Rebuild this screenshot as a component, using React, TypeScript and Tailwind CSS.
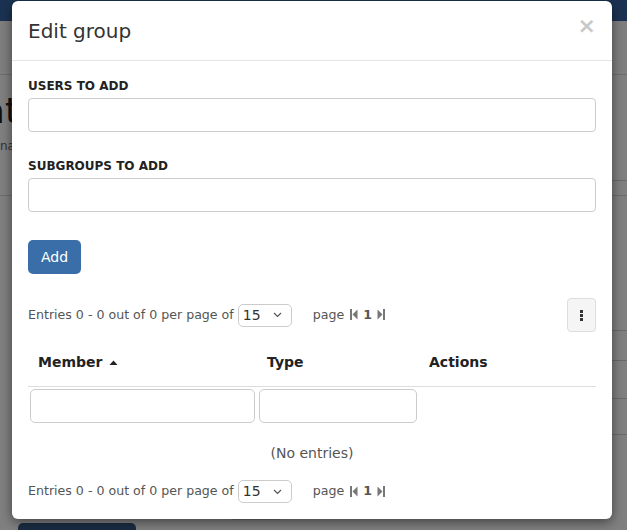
import React from 'react';

const font = { fontFamily: '"DejaVu Sans", Verdana, sans-serif' };

function FirstIcon() {
  return (
    <svg width="8" height="11" viewBox="0 0 8 11" className="inline-block">
      <rect x="0" y="0" width="2" height="11" fill="#777" />
      <path d="M7.5 0.5 L2.5 5.5 L7.5 10.5 Z" fill="#777" />
    </svg>
  );
}

function LastIcon() {
  return (
    <svg width="8" height="11" viewBox="0 0 8 11" className="inline-block">
      <path d="M0.5 0.5 L5.5 5.5 L0.5 10.5 Z" fill="#777" />
      <rect x="6" y="0" width="2" height="11" fill="#777" />
    </svg>
  );
}

function Pager() {
  return (
    <div className="flex items-center text-[12.6px] text-[#555]">
      <span>Entries 0 - 0 out of 0 per page of</span>
      <div className="ml-[4px] flex h-[23px] w-[54px] items-center justify-between rounded-[5px] border border-[#ccc] pl-[4px] pr-[9px]">
        <span className="text-[14px] text-[#333]">15</span>
        <svg width="9" height="6" viewBox="0 0 9 6">
          <path d="M1 1 L4.5 4.5 L8 1" stroke="#555" strokeWidth="1.2" fill="none" />
        </svg>
      </div>
      <span className="ml-[21px]">page</span>
      <span className="ml-[6px] flex items-center gap-[5px]">
        <FirstIcon />
        <span className="font-bold">1</span>
        <LastIcon />
      </span>
    </div>
  );
}

export default function App() {
  return (
    <div className="relative h-[530px] w-[627px] overflow-hidden bg-[#808080]" style={font}>
      {/* page behind the backdrop */}
      <div className="h-[21px] bg-[#1b3352]" />
      <div className="h-[54px] border-b border-[#6e6e6e] bg-[#7f7f7f]" />
      <div className="relative">
        <div className="whitespace-nowrap pt-[16px] text-[36px] leading-[40px] text-[#111]">
          <span className="ml-[-17px]">at</span>
        </div>
        <div className="mt-[6px] text-[12px] text-[#333]">na</div>
        <div className="mt-[40px] border-b border-[#6e6e6e]" />
      </div>
      <div className="absolute left-[600px] top-[180px] h-[1px] w-[27px] bg-[#6a6a6a]" />
      <div className="absolute left-[600px] top-[330px] h-[1px] w-[27px] bg-[#6a6a6a]" />
      <div className="absolute left-[600px] top-[360px] h-[1px] w-[27px] bg-[#6a6a6a]" />
      <div className="absolute left-[600px] top-[398px] h-[1px] w-[27px] bg-[#6a6a6a]" />
      <div className="absolute left-[600px] top-[434px] h-[1px] w-[27px] bg-[#6a6a6a]" />
      <div className="absolute left-[18px] top-[523px] h-[20px] w-[118px] rounded-[5px] bg-[#1b2c44]" />
      <div className="absolute left-[229px] top-[505px] h-[15px] w-[54px] rounded-[4px] border border-[#6a6a6a]" />

      {/* modal */}
      <div className="absolute left-[12px] top-[1px] w-[600px] rounded-[6px] bg-white shadow-[0_3px_12px_rgba(0,0,0,0.5)]">
        <div className="flex h-[60px] items-center justify-between border-b border-[#e5e5e5] px-[16px]">
          <h4 className="text-[20px] text-[#333]">Edit group</h4>
          <span className="mt-[-10px] text-[22px] font-bold leading-none text-[#c8c8c8]">×</span>
        </div>
        <div className="px-[16px] pt-[17px] pb-[16px]">
          <label className="block text-[12px] font-bold leading-[17px] text-[#222]">USERS TO ADD</label>
          <div className="mt-[3px] h-[34px] rounded-[4px] border border-[#ccc]" />
          <label className="mt-[26px] block text-[12px] font-bold leading-[17px] text-[#222]">SUBGROUPS TO ADD</label>
          <div className="mt-[3px] h-[34px] rounded-[4px] border border-[#ccc]" />
          <button className="mt-[28px] h-[34px] w-[53px] rounded-[5px] bg-[#3a6ea8] text-[14px] text-white">Add</button>

          <div className="mt-[24px] flex items-center justify-between">
            <Pager />
            <div className="flex h-[34px] w-[29px] items-center justify-center rounded-[4px] border border-[#ddd] bg-[#f5f5f5]">
              <svg width="3" height="11" viewBox="0 0 3 11">
                <rect x="0" y="0" width="3" height="3" fill="#333" />
                <rect x="0" y="4" width="3" height="3" fill="#333" />
                <rect x="0" y="8" width="3" height="3" fill="#333" />
              </svg>
            </div>
          </div>

          <div className="mt-[17px]">
            <div className="flex h-[38px] items-start border-b border-[#ddd] pt-[3px] text-[14px] font-bold text-[#222]">
              <div className="flex w-[239px] items-center pl-[10px]">
                Member
                <svg width="9" height="5" viewBox="0 0 9 5" className="ml-[7px]">
                  <path d="M0.5 5 L4.5 0.5 L8.5 5 Z" fill="#222" />
                </svg>
              </div>
              <div className="w-[162px]">Type</div>
              <div>Actions</div>
            </div>
            <div className="flex gap-[4px] pl-[2px] pt-[2px]">
              <div className="h-[34px] w-[225px] rounded-[5px] border border-[#ccc]" />
              <div className="h-[34px] w-[158px] rounded-[5px] border border-[#ccc]" />
            </div>
            <div className="pt-[20px] text-center text-[14px] text-[#555]">(No entries)</div>
          </div>

          <div className="mt-[16px]">
            <Pager />
          </div>
        </div>
      </div>
    </div>
  );
}
